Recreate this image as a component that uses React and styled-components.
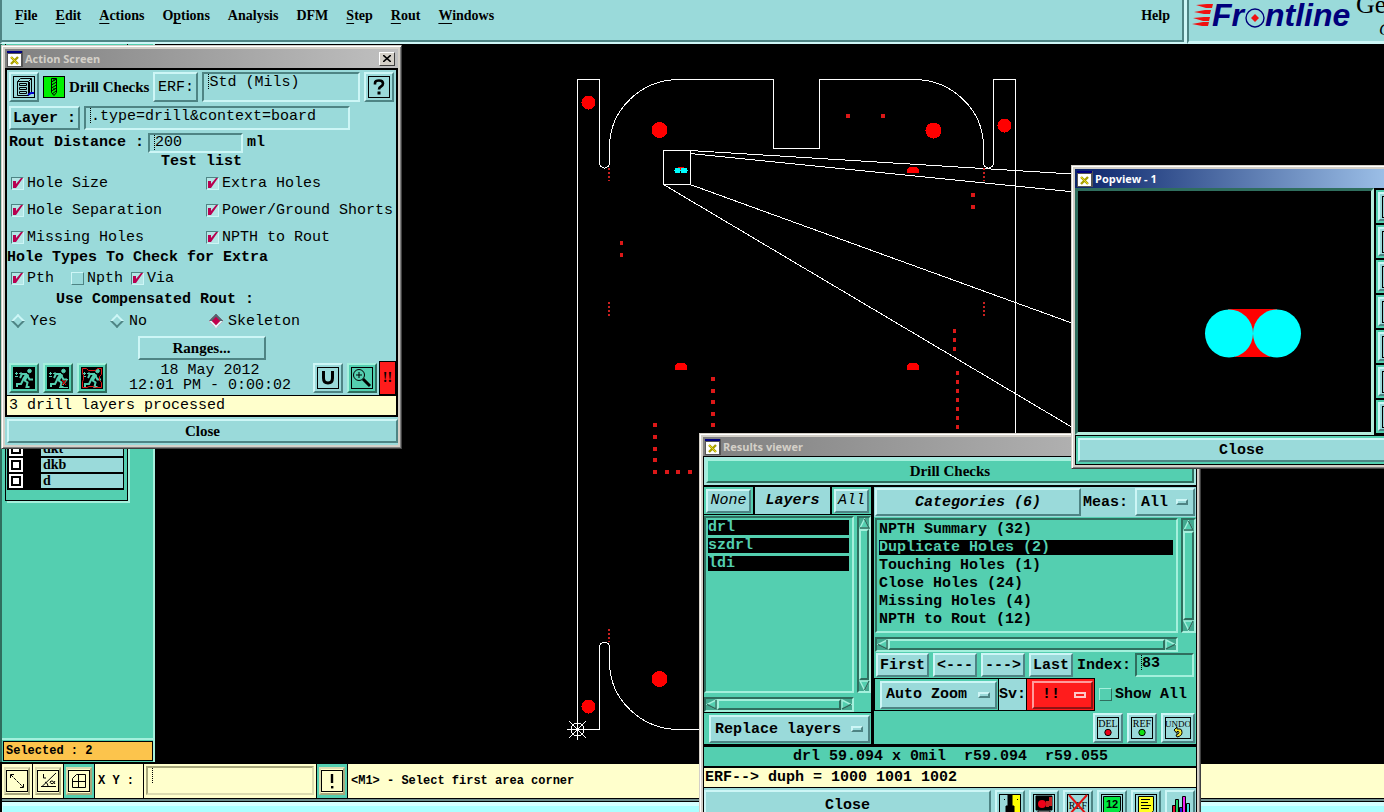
import React, { useState } from 'react'
import styled, { createGlobalStyle, css } from 'styled-components'

const mono = '"Liberation Mono", monospace'
const serif = '"Liberation Serif", serif'
const sans = '"Open Sans", "Noto Sans", sans-serif'

const tones = {
  cyan: { bg: '#9adada', light: '#cdf6f6', dark: '#4e8484' },
  green: { bg: '#54cfb0', light: '#a4f0dc', dark: '#2f6e5e' },
  cream: { bg: '#ffffcc', light: '#dcdcb0', dark: '#a8a87c' },
  red: { bg: '#ff1c1c', light: '#ff9c9c', dark: '#8e1414' },
}

const raised = css`
  background: ${p => tones[p.$tone || 'cyan'].bg};
  border: 2px solid;
  border-color: ${p => {
    const t = tones[p.$tone || 'cyan']
    return `${t.light} ${t.dark} ${t.dark} ${t.light}`
  }};
`

const sunken = css`
  background: ${p => tones[p.$tone || 'cyan'].bg};
  border: 2px solid;
  border-color: ${p => {
    const t = tones[p.$tone || 'cyan']
    return `${t.dark} ${t.light} ${t.light} ${t.dark}`
  }};
`

const GlobalStyle = createGlobalStyle`
  *, *::before, *::after { box-sizing: border-box; }
  body { margin: 0; background: #000; overflow: hidden; }
  button, input, select { margin: 0; padding: 0; border: 0; border-radius: 0; color: #000; font: inherit; }
  ul { margin: 0; padding: 0; list-style: none; }
  svg { display: block; flex: none; }
`

const Desktop = styled.div`
  position: relative;
  display: flex;
  flex-direction: column;
  height: 100vh;
  overflow: hidden;
  color: #000;
  font: 15px/15px ${mono};
`

/* ---------- top bar ---------- */

const TopBar = styled.header`
  display: flex;
  height: 44px;
  background: ${tones.cyan.bg};
`

const MenuFrame = styled.div`
  ${sunken}
  flex: 1;
  border-top: 0;
  border-right-width: 3px;
`

const MenuBar = styled.nav`
  display: flex;
  gap: 18px;
  height: 42px;
  padding: 7px 12px 0 13px;
  border: solid;
  border-width: 0 2px 2px 0;
  border-color: ${tones.cyan.dark};
  font: bold 14px/17px ${serif};
`

const MenuItem = styled.button`
  height: 17px;
  background: none;
  u { text-underline-offset: 3px; }
  &:last-child { margin-left: auto; }
`

const LogoPanel = styled.div`
  width: 197px;
  overflow: hidden;
  border-left: 2px solid ${tones.cyan.dark};
  border-bottom: 3px solid ${tones.cyan.light};
`

/* ---------- work area ---------- */

const WorkArea = styled.main`
  display: flex;
  flex: 1;
  min-height: 0;
  background: #000;
`

const SidePanel = styled.aside`
  display: flex;
  flex-direction: column;
  width: 155px;
  margin-bottom: 2px;
  background: ${tones.green.bg};
  border: solid;
  border-width: 0 2px 0 2px;
  border-color: ${tones.green.dark} ${tones.green.light} ${tones.green.light} ${tones.green.dark};
`

const LayerArea = styled.div`
  flex: 1;
  padding: 0 25px 0 3px;
  border-bottom: 2px solid ${tones.green.light};
`

const LayerFrame = styled.div`
  display: flex;
  flex-direction: column;
  justify-content: flex-end;
  height: 457px;
  padding: 0 3px 10px 1px;
  border: solid #000;
  border-width: 0 1px 1px 1px;
  box-shadow: 2px 2px 0 ${tones.green.light};
`

const LayerRow = styled.label`
  display: flex;
  gap: 18px;
  height: 16px;
  padding: 0 1px 2px 2px;
  background: #000;
  font: bold 14px/14px ${serif};
  span {
    flex: 1;
    padding-left: 2px;
    background: ${tones.cyan.bg};
  }
`

const LayerBox = styled.input`
  appearance: none;
  width: 14px;
  height: 14px;
  background: #fff;
  box-shadow: inset 0 0 0 2px #fff, inset 0 0 0 4px #000;
`

const Selected = styled.div`
  height: 20px;
  margin: 1px 0 1px 1px;
  padding-left: 2px;
  background: #fcc44c;
  border: 1px solid #000;
  font: bold 12px/18px ${mono};
`

const Board = styled.svg`
  flex: 1;
  min-width: 0;
  height: 100%;
`

/* ---------- status bar ---------- */

const StatusBar = styled.footer`
  display: flex;
  gap: 1px;
  height: 34px;
  padding-left: 2px;
  background: #000;
  font: bold 12px/14px ${mono};
`

const StatusCell = styled.div`
  display: flex;
  align-items: center;
  justify-content: center;
  width: 30px;
  background: ${p => tones[p.$tone || 'cream'].bg};
  button {
    width: 26px;
    height: 28px;
  }
`

const CoordLabel = styled.label`
  display: flex;
  align-items: center;
  width: 48px;
  padding-left: 3px;
  background: ${tones.cream.bg};
`

const Coords = styled.div`
  width: 172px;
  padding: 2px;
  background: ${tones.cream.bg};
`

const Message = styled.div`
  flex: 1;
  padding: 10px 3px;
  background: ${tones.cream.bg};
`

const BottomStrip = styled.div`
  height: 14px;
  margin-left: 2px;
  background: #aaffff;
  border-top: 1px solid #000;
  box-shadow: inset 0 2px #6e8c8c, inset 0 3px #000, inset 1px 7px #d4ffff;
`

/* ---------- shared controls ---------- */

const Window = styled.section`
  position: absolute;
  left: ${p => p.$x}px;
  top: ${p => p.$y}px;
  width: ${p => p.$w}px;
  padding: 3px;
  background: #d4d0c8;
  border: 1px solid;
  border-color: #d4d0c8 #404040 #404040 #d4d0c8;
  box-shadow: inset 1px 1px #fff, inset -1px -1px #808080;
`

const TitleBar = styled.div`
  display: flex;
  align-items: center;
  gap: 2px;
  height: 19px;
  padding: 0 3px 0 2px;
  background: linear-gradient(90deg, ${p => (p.$active ? '#0a246a, #a6caf0' : '#808080, #c0c0c0')});
  color: ${p => (p.$active ? '#fff' : '#d4d0c8')};
  font: bold 11px/16px ${sans};
`

const CloseX = styled.button`
  display: flex;
  align-items: center;
  justify-content: center;
  width: 16px;
  height: 14px;
  margin-left: auto;
  background: #d4d0c8;
  border: 1px solid;
  border-color: #fff #404040 #404040 #fff;
`

const Button = styled.button`
  ${raised}
  flex: none;
  height: ${p => p.$h || 24}px;
  width: ${p => (p.$w ? `${p.$w}px` : 'auto')};
  padding: 0 2px;
  font: ${p => (p.$plain ? 'normal' : 'bold')} 15px/15px ${p => (p.$serif ? serif : mono)};
  font-style: ${p => (p.$italic ? 'italic' : 'normal')};
  white-space: nowrap;
`

const IconButton = styled.button`
  ${raised}
  display: flex;
  flex: none;
  align-items: center;
  justify-content: center;
  width: ${p => p.$w || 30}px;
  height: 30px;
`

const Field = styled.div`
  ${sunken}
  display: flex;
  flex: ${p => (p.$w ? 'none' : 1)};
  min-width: 0;
  width: ${p => (p.$w ? `${p.$w}px` : 'auto')};
  height: ${p => p.$h}px;
  padding-left: 4px;
  &::before {
    content: '';
    height: 15px;
    border-left: 1px dotted #000;
  }
  input {
    flex: 1;
    min-width: 0;
    height: 16px;
    background: none;
    outline: 0;
    font: ${p => (p.$bold ? 'bold' : 'normal')} 15px/15px ${mono};
  }
`

const Option = styled.label`
  display: flex;
  align-items: center;
  gap: ${p => p.$gap || 3}px;
  white-space: pre;
`

const Check = styled.input`
  ${sunken}
  appearance: none;
  flex: none;
  width: 13px;
  height: 13px;
  border-width: 1px;
  &:not(:checked) {
    border-color: ${p => {
      const t = tones[p.$tone || 'cyan']
      return `${t.light} ${t.dark} ${t.dark} ${t.light}`
    }};
  }
  &:checked { background: #b4e6e6; }
  &:checked::before {
    content: '';
    display: block;
    width: 11px;
    height: 11px;
    background: #b80050;
    clip-path: polygon(1px 3px, 4px 3px, 4px 6px, 9px 0, 11px 0, 4px 10px, 1px 10px);
  }
`

const Radio = styled.input`
  ${raised}
  appearance: none;
  width: 10px;
  height: 10px;
  margin: 0 2px;
  transform: rotate(45deg);
  &:checked {
    background: #c0004c;
    border-color: #4e6a70 #e4f8f8 #e4f8f8 #4e6a70;
  }
`

const Picker = styled.div`
  ${raised}
  display: flex;
  flex: none;
  align-items: center;
  width: ${p => p.$w}px;
  height: 28px;
  padding: 0 5px 0 4px;
  select {
    appearance: none;
    flex: 1;
    min-width: 0;
    background: none;
    font: bold 15px/17px ${mono};
    text-indent: ${p => p.$indent || 0}px;
  }
  &::after {
    content: '';
    flex: none;
    width: 12px;
    height: 6px;
    border: 2px solid;
    border-color: ${p => {
      const t = tones[p.$tone || 'cyan']
      return p.$tone === 'red' ? '#ffc8c8' : `${t.light} ${t.dark} ${t.dark} ${t.light}`
    }};
  }
`

/* ---------- action screen ---------- */

const ActionBody = styled.form`
  border: 2px solid #000;
  background: ${tones.cyan.bg};
`

const Row = styled.div`
  display: flex;
  align-items: center;
  gap: 4px;
  height: ${p => p.$h}px;
  padding: 0 2px;
  justify-content: ${p => (p.$center ? 'center' : 'flex-start')};
`

const Heading = styled.div`
  height: ${p => p.$h}px;
  padding-left: ${p => p.$indent || 0}px;
  text-align: ${p => (p.$center ? 'center' : 'left')};
  font-weight: bold;
  line-height: ${p => p.$h}px;
  white-space: pre;
`

const Title = styled.span`
  font: bold 15px/17px ${serif};
  white-space: nowrap;
`

const TestGrid = styled.div`
  display: grid;
  grid-template-columns: 195px 1fr;
  grid-auto-rows: 27px;
  padding-left: 4px;
`

const Choices = styled.div`
  display: grid;
  grid-template-columns: ${p => p.$cols};
  height: ${p => p.$h}px;
  padding-left: 4px;
`

const Clock = styled.time`
  flex: 1;
  text-align: center;
`

const Alert = styled.button`
  width: 17px;
  height: 34px;
  margin: 0 -2px;
  background: ${tones.red.bg};
  border: 1px solid #000;
  font: bold 14px/14px ${serif};
`

const Notice = styled.output`
  display: block;
  height: 20px;
  padding: 2px 2px 0;
  background: ${tones.cream.bg};
  border-top: 1px solid #000;
`

const CloseArea = styled.div`
  display: flex;
  padding: 2px 0 2px 2px;
  background: ${tones.cyan.bg};
  button { flex: 1; }
`

/* ---------- results viewer ---------- */

const ResultsBody = styled.div`
  display: flex;
  flex-direction: column;
  padding: 1px;
  background: #000;
  font-weight: bold;
`

const Header = styled.div`
  display: flex;
  height: 28px;
  margin-bottom: 2px;
  padding: 2px;
  background: #a8e8e0;
  button { flex: 1; }
`

const Panes = styled.div`
  display: flex;
  gap: 3px;
  height: 257px;
`

const LeftPane = styled.div`
  display: flex;
  flex: none;
  flex-direction: column;
  gap: 1px;
  width: 167px;
`

const RightPane = styled.div`
  display: flex;
  flex: 1;
  flex-direction: column;
  min-width: 0;
  background: ${tones.green.bg};
`

const LayerTabs = styled.div`
  display: flex;
  gap: 2px;
  height: 27px;
`

const Tab = styled.div`
  display: flex;
  flex: ${p => (p.$grow ? 1 : 'none')};
  align-items: center;
  justify-content: center;
  padding: 0 2px;
  background: ${p => tones[p.$grow ? 'cyan' : 'green'].bg};
  font-style: italic;
`

const ScrollArea = styled.div`
  display: grid;
  grid-template-columns: 1fr ${p => p.$bar}px;
  grid-template-rows: 1fr 15px;
  gap: 4px 3px;
  flex: ${p => (p.$grow ? 1 : 'none')};
  height: ${p => (p.$grow ? 'auto' : '135px')};
  padding: 1px 0 0 ${p => (p.$grow ? 0 : 1)}px;
  background: ${tones.green.bg};
`

const List = styled.ul`
  ${sunken}
  display: flex;
  flex-direction: column;
  gap: 3px;
  padding: 2px 3px 0 2px;
`

const Item = styled.button`
  display: block;
  width: 100%;
  height: 15px;
  background: ${p => (p.$on ? '#000' : 'none')};
  color: ${p => (p.$on ? tones.green.bg : '#000')};
  font: bold 15px/15px ${mono};
  text-align: left;
`

const Track = styled.div`
  ${sunken}
  display: flex;
  flex-direction: ${p => (p.$vertical ? 'column' : 'row')};
  background: #43a98f;
`

const Thumb = styled.i`
  ${raised}
  flex: 1;
`

const MenuCell = styled.div`
  display: flex;
  height: 31px;
  padding: 2px 1px 2px 5px;
  background: ${tones.green.bg};
`

const CategoryRow = styled.div`
  display: flex;
  align-items: center;
  height: 30px;
  padding: 0 1px;
  background: ${tones.cyan.bg};
  label { margin: 0 auto 0 2px; }
`

const ModeRow = styled.div`
  display: flex;
  align-items: center;
  gap: 4px;
  height: 33px;
`

const ModeGroup = styled.div`
  display: flex;
  gap: 1px;
  height: 33px;
  padding: 1px;
  background: #000;
`

const ModeCell = styled.div`
  display: flex;
  align-items: center;
  padding: ${p => (p.$pad ? '0 1px 0 5px' : '0')};
  background: ${p => tones[p.$tone || 'cyan'].bg};
`

const Tools = styled.div`
  display: flex;
  flex: 1;
  gap: 4px;
  justify-content: flex-end;
  padding: 2px 1px 0;
`

const Readout = styled.output`
  display: block;
  height: 19px;
  margin-top: ${p => p.$top}px;
  padding: 2px 0 0 1px;
  background: ${p => tones[p.$tone].bg};
  text-align: ${p => (p.$tone === 'green' ? 'center' : 'left')};
  white-space: pre;
`

const ResultsFooter = styled.div`
  display: flex;
  gap: 4px;
  margin-top: 1px;
  padding: 2px 1px 2px 0;
  background: ${tones.cyan.bg};
  > button:first-child { flex: 1; }
`

/* ---------- popview ---------- */

const PopBody = styled.div`
  display: flex;
  gap: 2px;
  height: 247px;
  background: #000;
`

const PopCanvas = styled.div`
  flex: 1;
  border: 3px solid;
  border-color: ${tones.green.dark} #b4ecdc #b4ecdc ${tones.green.dark};
`

const PopTools = styled.div`
  display: grid;
  grid-auto-rows: 33px;
  gap: 2px;
  padding-top: 2px;
  width: 32px;
`

const PopTool = styled.div`
  padding: 2px 1px 2px 2px;
  background: ${tones.green.bg};
  button {
    width: 29px;
    height: 29px;
  }
`

const PopClose = styled.div`
  display: flex;
  padding: 2px;
  background: ${tones.green.bg};
  border: 1px solid #000;
  button { flex: 1; }
`

/* ---------- drawings ---------- */

const Icon = ({ children, size = 22, ...rest }) => (
  <svg width={size} height={size} viewBox="0 0 22 22" fill="none" stroke="#000" aria-hidden="true" {...rest}>
    {children}
  </svg>
)

const Box = ({ fill = 'none' }) => <rect x=".5" y=".5" width="21" height="21" fill={fill} />

const AppIcon = () => (
  <svg width="16" height="16" viewBox="0 0 16 16" aria-hidden="true">
    <path d="M0 0h16v16H0z" fill="#555" />
    <path d="M1 3h13v12H1z" fill="#fff" />
    <path d="M0 0h15v2H0z" fill="#000080" />
    <path d="M4 6l7 7M11 6l-7 7" stroke="#a8a000" strokeWidth="2.4" />
    <path d="M4 6l7 7" stroke="#e8d820" strokeWidth="1" />
  </svg>
)

const CabinetIcon = () => (
  <Icon>
    <Box />
    <path d="M4.500 5.500h11v14h-11zM4.500 5.500l3-3h11l-3 3M18.500 2.500v14l-3 3" />
    <path d="M6.500 7.500h7v2h-7zM6.500 11.500h7v2h-7zM6.500 15.500h7v2h-7z" />
    <path d="M8 9.500h4M8 13.500h4M8 17.500h4M16.500 6v11" />
    <path d="M15 19l3-2h3" stroke="#0000d0" strokeWidth="2" />
  </Icon>
)

const DrillIcon = () => (
  <Icon>
    <Box fill="#00f000" />
    <path d="M8.500 2.500h5v14l-2.500 3-2.500-3z" />
    <path d="M8.500 6l5-3M8.500 9l5-3M8.500 12l5-3M8.500 15l5-3M9 18l4-3M11 3v2M11 12v2" />
  </Icon>
)

const HelpIcon = () => (
  <Icon>
    <Box />
    <path d="M7 8.500V7q0-2.500 4-2.500T15 7.500q0 2-2 3t-2 3" strokeWidth="2.600" />
    <path d="M9.500 15.500h3v3h-3z" fill="#000" stroke="none" />
  </Icon>
)

const RunIcon = ({ variant }) => (
  <Icon>
    <path d="M0 0h22v22H0z" fill="#000" stroke="none" />
    <g stroke={tones.green.bg}>
      <circle cx="16.500" cy="4" r="1.800" fill={tones.green.bg} />
      <path d="M14.500 7l-4 6.500" strokeWidth="4" />
      <path d="M14 7H9l-2 4M14 8l2.500 4.500H20M11 13l3.500 2.500-1 4.500h3M10 13l-2 4H4v3" strokeWidth="2" />
      <path d="M2 6.500h3M6 6.500h2M3.500 5v3M8 5v3M2 9.500h3" />
    </g>
    {variant === 'area' && (
      <>
        <path d="M12 20.500h9M16 18l5-6" stroke={tones.green.bg} />
        <path d="M15 13l4 5M19 13l-4 5" stroke="#f00000" />
      </>
    )}
    {variant === 'profile' && (
      <path d="M1.500 1.500h4l2 2h7l2-2h4v6l-2 2v4l2 2v5h-6l-2-1H8l-2 1H1.500v-6l1-2v-4l-1-2z" stroke="#e01818" />
    )}
  </Icon>
)

const UnitsIcon = () => (
  <Icon>
    <Box />
    <path d="M6.500 4v7q0 5 4.500 5t4.500-5V4" strokeWidth="3" />
  </Icon>
)

const ZoomIcon = () => (
  <Icon>
    <Box fill={tones.green.bg} />
    <circle cx="8" cy="8" r="5.500" />
    <path d="M5 8h6M8 5v6" />
    <path d="M12 12l7 7" strokeWidth="3" />
  </Icon>
)

const labelText = {
  fill: '#000',
  stroke: 'none',
  fontFamily: 'Liberation Serif',
  fontSize: 10,
  fontWeight: 'normal',
  textAnchor: 'middle',
}

const DelIcon = () => (
  <Icon>
    <Box />
    <text x="11" y="10" {...labelText}>DEL</text>
    <circle cx="11" cy="15.500" r="3.200" fill="#e80018" />
  </Icon>
)

const RefIcon = () => (
  <Icon>
    <Box />
    <text x="11" y="10" {...labelText}>REF</text>
    <circle cx="11" cy="15.500" r="3.200" fill="#10e010" />
  </Icon>
)

const UndoIcon = () => (
  <svg width="28" height="22" viewBox="0 0 28 22" fill="none" stroke="#000" aria-hidden="true">
    <rect x="1.500" y=".5" width="25" height="21" />
    <text x="14" y="10" {...labelText} fontSize="9">UNDO</text>
    <path d="M10 13l3-3v2h3q2 0 2 3.500t-5 4.500l-1-2q3-1 3-2.500t-2-1v2z" fill="#f0e838" />
  </svg>
)

const DoorIcon = () => (
  <Icon>
    <Box fill="#9adada" />
    <path d="M12 1h9v20h-9z" fill="#ffff00" stroke="none" />
    <path d="M9 1h4v11h2v9H7v-9h2z" fill="#000" />
    <path d="M5.500 5v1M18.500 5v1" />
  </Icon>
)

const CameraIcon = () => (
  <Icon>
    <Box />
    <path d="M3 2h16v14H3z" fill="#000" />
    <circle cx="9" cy="10" r="4" fill="#f00018" stroke="none" />
    <path d="M13 7h3v6h-3zM16 3h3v9h-3z" fill="#c82020" stroke="none" />
    <path d="M5 17h12v5H5z" fill="#ddd" />
  </Icon>
)

const NoRefIcon = () => (
  <Icon>
    <Box />
    <text x="11" y="15" {...labelText}>REF</text>
    <path d="M2 1l18 20M20 1L2 21" stroke="#e01010" strokeWidth="2" />
  </Icon>
)

const NumberIcon = () => (
  <Icon>
    <Box />
    <path d="M2.500 2.500h17v14l-3 4h-14z" fill="#00e840" />
    <text x="11" y="14" {...labelText} fontSize="11" fontWeight="bold" fontFamily="Liberation Sans">12</text>
  </Icon>
)

const NoteIcon = () => (
  <Icon>
    <Box />
    <path d="M3.500 2.500h15v14l-3 4h-12z" fill="#ffff20" />
    <path d="M6 5.500h9M6 8.500h7M6 11.500h10M6 14.500h8" />
  </Icon>
)

const ChartIcon = () => (
  <Icon>
    <path d="M3.500 11.500h3v12h-3z" fill="#e01030" />
    <path d="M6.500 5.500h3v16h-3z" fill="#20d060" />
    <path d="M10.500 13.500h3v10h-3z" fill="#2020e0" />
    <path d="M13.500 2.500h3v20h-3z" fill="#f020f0" />
    <path d="M17.500 9.500h3v12h-3z" fill="#40e0e0" />
  </Icon>
)

const ExtentIcon = () => (
  <Icon>
    <Box />
    <path d="M5 5l12 12" strokeDasharray="3 1" />
    <path d="M4.500 8V4.500H8M17.500 14v3.500H14" />
  </Icon>
)

const AngleIcon = () => (
  <Icon>
    <Box />
    <path d="M4 16.500h15M5 16.500L19 3M6.500 4v4H9M8 12q3 1 3 4" />
    <path d="M18 11q-2 4-4 2.500t0-2.500 4 3" />
  </Icon>
)

const GridIcon = () => (
  <Icon>
    <Box />
    <path d="M4.500 8.500l4-4h9v13h-13zM4.500 11.500h13M10.500 4.500v13" />
  </Icon>
)

const BangIcon = () => (
  <Icon>
    <Box />
    <path d="M11 4v9" strokeWidth="2.400" />
    <path d="M10 16h2.400v2.400H10z" fill="#000" stroke="none" />
  </Icon>
)

const arrows = {
  up: 'M5.500 1L10 10H1z',
  down: 'M1 1h9L5.500 10z',
  left: 'M10 1v9L1 5.500z',
  right: 'M1 1l9 4.500L1 10z',
}

const arrowShades = {
  up: 'M5.500 1L10 10H1',
  down: 'M10 1L5.500 10',
  left: 'M10 1v9L1 5.500',
  right: 'M10 5.500L1 10',
}

const Arrow = ({ dir }) => (
  <svg width="11" height="11" viewBox="0 0 11 11" aria-hidden="true">
    <path d={arrows[dir]} fill={tones.green.bg} stroke={tones.green.light} strokeWidth="1.400" />
    <path d={arrowShades[dir]} fill="none" stroke={tones.green.dark} strokeWidth="1.400" />
  </svg>
)

const ScrollBar = ({ vertical }) => (
  <Track $tone="green" $vertical={vertical}>
    <Arrow dir={vertical ? 'up' : 'left'} />
    <Thumb $tone="green" />
    <Arrow dir={vertical ? 'down' : 'right'} />
  </Track>
)

const Logo = () => (
  <svg width="195" height="41" aria-label="Frontline" role="img">
    <g fill="#f01010">
      <path d="M7 5l11-1h6l-1 4h-6zM5 12l11-2h6l-1 4h-6zM4 18l11-1h6l-1 4h-6zM3 24l11-2h6l-1 4h-6z" />
    </g>
    <g fill="#00007c" fontFamily="Liberation Sans" fontSize="32" fontWeight="bold" fontStyle="italic">
      <text x="23" y="26">Fr</text>
      <text x="76" y="26">ntline</text>
    </g>
    <circle cx="66" cy="18" r="9" fill="none" stroke="#00007c" strokeWidth="1.400" />
    <path d="M66 14l4 4-4 4-4-4z" fill="#f01010" />
    <g fontFamily="Liberation Serif" fill="#000">
      <text x="167" y="13" fontSize="26">Ge</text>
      <text x="190" y="35" fontSize="17" fontStyle="italic">C</text>
    </g>
  </svg>
)

const bigHoles = [[588.5, 102.5, 7], [1004.5, 125.5, 7], [588.5, 706.5, 7], [659.5, 130, 8], [933.5, 130.5, 8], [659.5, 679, 8]]

const pads = [
  [848, 116], [883, 116], [973, 195], [973, 207],
  ...[379, 391, 402, 414, 425].map(y => [713, y]),
  ...[425, 437, 449, 460, 472].map(y => [655, y]),
  [667, 472], [678, 472], [690, 472],
]

const vias = [
  [621, 243], [621, 255],
  ...[331, 340, 349].map(y => [954, y]),
  ...[373, 382, 391, 400, 409, 418, 427].map(y => [957, y]),
]

const slots = [[608, 168, 181], [608, 302, 318], [983, 168, 181], [983, 302, 318], [608, 629, 642]]

const Artwork = () => (
  <Board aria-label="Board layout">
    <g transform="translate(-155 -44)">
      <g fill="none" stroke="#fff" shapeRendering="crispEdges">
        <path d="M577.500 729.500V79.500H599.500V163A5 5 0 0 0 609.500 163V147A70 67.500 0 0 1 679 79.500H773.500V148.500H819.500V79.500H914A70 67.500 0 0 1 983.500 147V163A5 5 0 0 0 993.500 163V79.500H1015.500V729.500" />
        <path d="M577.500 729.500H599.500V647Q600 642.500 604.500 642.500T609.500 647V662A70 67.500 0 0 0 680 729.500H914" />
        <path d="M663.500 150.500h27v34h-27z" />
        <path d="M690 150.500L1080 174.500M690 153.500L1080 192.500M690 184.500L1080 326M663.500 184.500L1080 432" />
        <path d="M567 729.500h19M577.500 720v20M569 721l17 17M586 721l-17 17" />
        <circle cx="577.500" cy="729.500" r="6.500" />
      </g>
      <g fill="#ff0000" shapeRendering="crispEdges">
        {bigHoles.map(([x, y, r]) => <circle key={`${x}-${y}`} cx={x} cy={y} r={r} />)}
        <path d="M675 365l3-2h6l3 2v5h-12zM907 365l3-2h6l3 2v5h-12zM907 169l3-2h6l3 2v4h-12z" />
      </g>
      <g fill="#dc1818" shapeRendering="crispEdges">
        {pads.map(([x, y]) => <rect key={`${x}-${y}`} x={x - 2} y={y - 2} width="4" height="4" />)}
        {vias.map(([x, y]) => <rect key={`${x}-${y}`} x={x - 1} y={y - 2} width="3" height="4" />)}
      </g>
      <g stroke="#c82020" strokeWidth="2" strokeDasharray="2 2" shapeRendering="crispEdges">
        {slots.map(([x, a, b]) => <path key={`${x}-${a}`} d={`M${x + 1} ${a}V${b}`} />)}
      </g>
      <path d="M678 167h6v3h-6z" fill="#ff0000" />
      <path d="M675 168h5v5h-5zM681 168h6v5h-6zM674 170h14v1h-14z" fill="#00ffff" shapeRendering="crispEdges" />
    </g>
  </Board>
)

/* ---------- data ---------- */

const menus = [['', 'F', 'ile'], ['', 'E', 'dit'], ['', 'A', 'ctions'], ['O', 'p', 'tions'], ['Analysis'], ['DFM'], ['', 'S', 'tep'], ['', 'R', 'out'], ['', 'W', 'indows'], ['Help']]
const tests = ['Hole Size', 'Extra Holes', 'Hole Separation', 'Power/Ground Shorts', 'Missing Holes', 'NPTH to Rout']
const categories = ['NPTH Summary (32)', 'Duplicate Holes (2)', 'Touching Holes (1)', 'Close Holes (24)', 'Missing Holes (4)', 'NPTH to Rout (12)']

const ActionScreen = () => {
  const [rout, setRout] = useState('Skeleton')

  return (
    <Window $x={1} $y={45} $w={401}>
      <TitleBar>
        <AppIcon />
        Action Screen
        <CloseX aria-label="Close window">
          <svg width="8" height="7" viewBox="0 0 8 7" stroke="#000" strokeWidth="1.600"><path d="M0 0l8 7M8 0L0 7" /></svg>
        </CloseX>
      </TitleBar>
      <ActionBody onSubmit={e => e.preventDefault()}>
        <Row $h={34}>
          <IconButton type="button" aria-label="Open"><CabinetIcon /></IconButton>
          <DrillIcon />
          <Title>Drill Checks</Title>
          <Button type="button" $h={30} $w={45} $plain>ERF:</Button>
          <Field $h={30}><input aria-label="ERF" defaultValue="Std (Mils)" /></Field>
          <IconButton type="button" aria-label="Help"><HelpIcon /></IconButton>
        </Row>
        <Row $h={28}>
          <Button type="button" $w={71}>Layer :</Button>
          <Field $h={24} $w={266}><input aria-label="Layer" defaultValue=".type=drill&context=board" /></Field>
        </Row>
        <Row $h={21}>
          <Option htmlFor="rout-distance"><b>Rout Distance :</b></Option>
          <Field $h={20} $w={95}><input id="rout-distance" defaultValue="200" /></Field>
          <b>ml</b>
        </Row>
        <Heading $h={17} $center>Test list</Heading>
        <TestGrid>
          {tests.map(name => (
            <Option key={name}><Check type="checkbox" defaultChecked />{name}</Option>
          ))}
        </TestGrid>
        <Heading $h={14}>Hole Types To Check for Extra</Heading>
        <Choices $h={27} $cols="60px 60px 1fr">
          <Option><Check type="checkbox" defaultChecked />Pth</Option>
          <Option><Check type="checkbox" />Npth</Option>
          <Option><Check type="checkbox" defaultChecked />Via</Option>
        </Choices>
        <Heading $h={15} $indent={49}>Use Compensated Rout :</Heading>
        <Choices $h={28} $cols="99px 99px 1fr">
          {['Yes', 'No', 'Skeleton'].map(name => (
            <Option key={name} $gap={5}>
              <Radio type="radio" name="rout" checked={rout === name} onChange={() => setRout(name)} />
              {name}
            </Option>
          ))}
        </Choices>
        <Row $h={26} $center>
          <Button type="button" $w={128} $serif>Ranges...</Button>
        </Row>
        <Row $h={34}>
          <IconButton type="button" $tone="green" aria-label="Run"><RunIcon /></IconButton>
          <IconButton type="button" $tone="green" aria-label="Run on area"><RunIcon variant="area" /></IconButton>
          <IconButton type="button" $tone="green" aria-label="Run on profile"><RunIcon variant="profile" /></IconButton>
          <Clock>18 May 2012<br />12:01 PM - 0:00:02</Clock>
          <IconButton type="button" aria-label="Units"><UnitsIcon /></IconButton>
          <IconButton type="button" $tone="green" aria-label="Results"><ZoomIcon /></IconButton>
          <Alert type="button">!!</Alert>
        </Row>
        <Notice>3 drill layers processed</Notice>
      </ActionBody>
      <CloseArea><Button $serif>Close</Button></CloseArea>
    </Window>
  )
}

const ResultsViewer = () => {
  const [category, setCategory] = useState(categories[1])

  return (
    <Window $x={699} $y={433} $w={502}>
      <TitleBar><AppIcon />Results viewer</TitleBar>
      <ResultsBody>
        <Header><Button $tone="green" $serif>Drill Checks</Button></Header>
        <Panes>
          <LeftPane>
            <LayerTabs>
              <Tab><Button $plain $italic $w={45}>None</Button></Tab>
              <Tab $grow>Layers</Tab>
              <Tab><Button $plain $italic $w={35}>All</Button></Tab>
            </LayerTabs>
            <ScrollArea $grow $bar={14}>
              <List $tone="green">
                {['drl', 'szdrl', 'ldi'].map(name => <li key={name}><Item $on>{name}</Item></li>)}
              </List>
              <ScrollBar vertical />
              <ScrollBar />
            </ScrollArea>
            <MenuCell>
              <Picker $w={161}>
                <select aria-label="Layer mode"><option>Replace layers</option></select>
              </Picker>
            </MenuCell>
          </LeftPane>
          <RightPane>
            <CategoryRow>
              <Button $w={206} $h={28} $italic>Categories (6)</Button>
              <label htmlFor="meas">Meas:</label>
              <Picker $w={60}>
                <select id="meas"><option>All</option></select>
              </Picker>
            </CategoryRow>
            <ScrollArea $bar={15}>
              <List $tone="green">
                {categories.map(name => (
                  <li key={name}>
                    <Item $on={name === category} onClick={() => setCategory(name)}>{name}</Item>
                  </li>
                ))}
              </List>
              <ScrollBar vertical />
              <ScrollBar />
            </ScrollArea>
            <Row $h={26}>
              <Button $w={53}>First</Button>
              <Button $w={44}>{'<---'}</Button>
              <Button $w={44}>{'--->'}</Button>
              <Button $w={44}>Last</Button>
              <label htmlFor="index">Index:</label>
              <Field $tone="green" $h={24} $bold><input id="index" defaultValue="83" /></Field>
            </Row>
            <ModeRow>
              <ModeGroup>
                <ModeCell $pad $tone="green">
                  <Picker $w={117}>
                    <select aria-label="Zoom mode"><option>Auto Zoom</option></select>
                  </Picker>
                </ModeCell>
                <ModeCell as="label" htmlFor="severity">Sv:</ModeCell>
                <ModeCell $pad $tone="red">
                  <Picker $w={61} $tone="red" $indent={4}>
                    <select id="severity"><option>!!</option></select>
                  </Picker>
                </ModeCell>
              </ModeGroup>
              <Option><Check type="checkbox" $tone="green" />Show All</Option>
            </ModeRow>
            <Tools>
              <IconButton aria-label="Delete"><DelIcon /></IconButton>
              <IconButton aria-label="Reference"><RefIcon /></IconButton>
              <IconButton $w={34} aria-label="Undo"><UndoIcon /></IconButton>
            </Tools>
          </RightPane>
        </Panes>
        <Readout $tone="green" $top={3}>{'drl 59.094 x 0mil  r59.094  r59.055'}</Readout>
        <Readout $tone="cream" $top={2}>{'ERF--> duph = 1000 1001 1002'}</Readout>
        <ResultsFooter>
          <Button $h={30}>Close</Button>
          <IconButton aria-label="Hide"><DoorIcon /></IconButton>
          <IconButton aria-label="Snapshot"><CameraIcon /></IconButton>
          <IconButton aria-label="Clear reference"><NoRefIcon /></IconButton>
          <IconButton aria-label="Numbers"><NumberIcon /></IconButton>
          <IconButton aria-label="Report"><NoteIcon /></IconButton>
          <IconButton aria-label="Histogram"><ChartIcon /></IconButton>
        </ResultsFooter>
      </ResultsBody>
    </Window>
  )
}

const Popview = () => (
  <Window $x={1071} $y={165} $w={341}>
    <TitleBar $active><AppIcon />Popview - 1</TitleBar>
    <PopBody>
      <PopCanvas>
        <svg width="100%" height="100%" aria-label="Zoomed holes">
          <path d="M150 118h49l-7 48h-35z" fill="#ff0000" />
          <circle cx="151" cy="142.500" r="24" fill="#00ffff" />
          <circle cx="199" cy="142.500" r="24" fill="#00ffff" />
        </svg>
      </PopCanvas>
      <PopTools>
        {['Pan', 'In', 'Out', 'Home', 'Fit', 'Grid', 'Copy'].map(name => (
          <PopTool key={name}>
            <IconButton aria-label={name}><Icon><Box /></Icon></IconButton>
          </PopTool>
        ))}
      </PopTools>
    </PopBody>
    <PopClose><Button>Close</Button></PopClose>
  </Window>
)

const App = () => (
  <Desktop>
    <GlobalStyle />
    <TopBar>
      <MenuFrame>
        <MenuBar>
          {menus.map(([head, key, tail]) => (
            <MenuItem key={head + key}>{head}{key && <u>{key}</u>}{tail}</MenuItem>
          ))}
        </MenuBar>
      </MenuFrame>
      <LogoPanel><Logo /></LogoPanel>
    </TopBar>
    <WorkArea>
      <SidePanel>
        <LayerArea>
          <LayerFrame>
            {['dkt', 'dkb', 'd'].map(name => (
              <LayerRow key={name}><LayerBox type="checkbox" /><span>{name}</span></LayerRow>
            ))}
          </LayerFrame>
        </LayerArea>
        <Selected>Selected : 2</Selected>
      </SidePanel>
      <Artwork />
    </WorkArea>
    <StatusBar>
      <StatusCell><IconButton $tone="cream" aria-label="Extent"><ExtentIcon /></IconButton></StatusCell>
      <StatusCell><IconButton $tone="cream" aria-label="Angle"><AngleIcon /></IconButton></StatusCell>
      <StatusCell $tone="green"><IconButton $tone="cream" aria-label="Grid"><GridIcon /></IconButton></StatusCell>
      <CoordLabel htmlFor="coords">X Y :</CoordLabel>
      <Coords><Field $tone="cream" $h={29}><input id="coords" /></Field></Coords>
      <StatusCell $tone="green"><IconButton $tone="cream" aria-label="Messages"><BangIcon /></IconButton></StatusCell>
      <Message>{'<M1> - Select first area corner'}</Message>
    </StatusBar>
    <BottomStrip />
    <ActionScreen />
    <ResultsViewer />
    <Popview />
  </Desktop>
)

export default App
